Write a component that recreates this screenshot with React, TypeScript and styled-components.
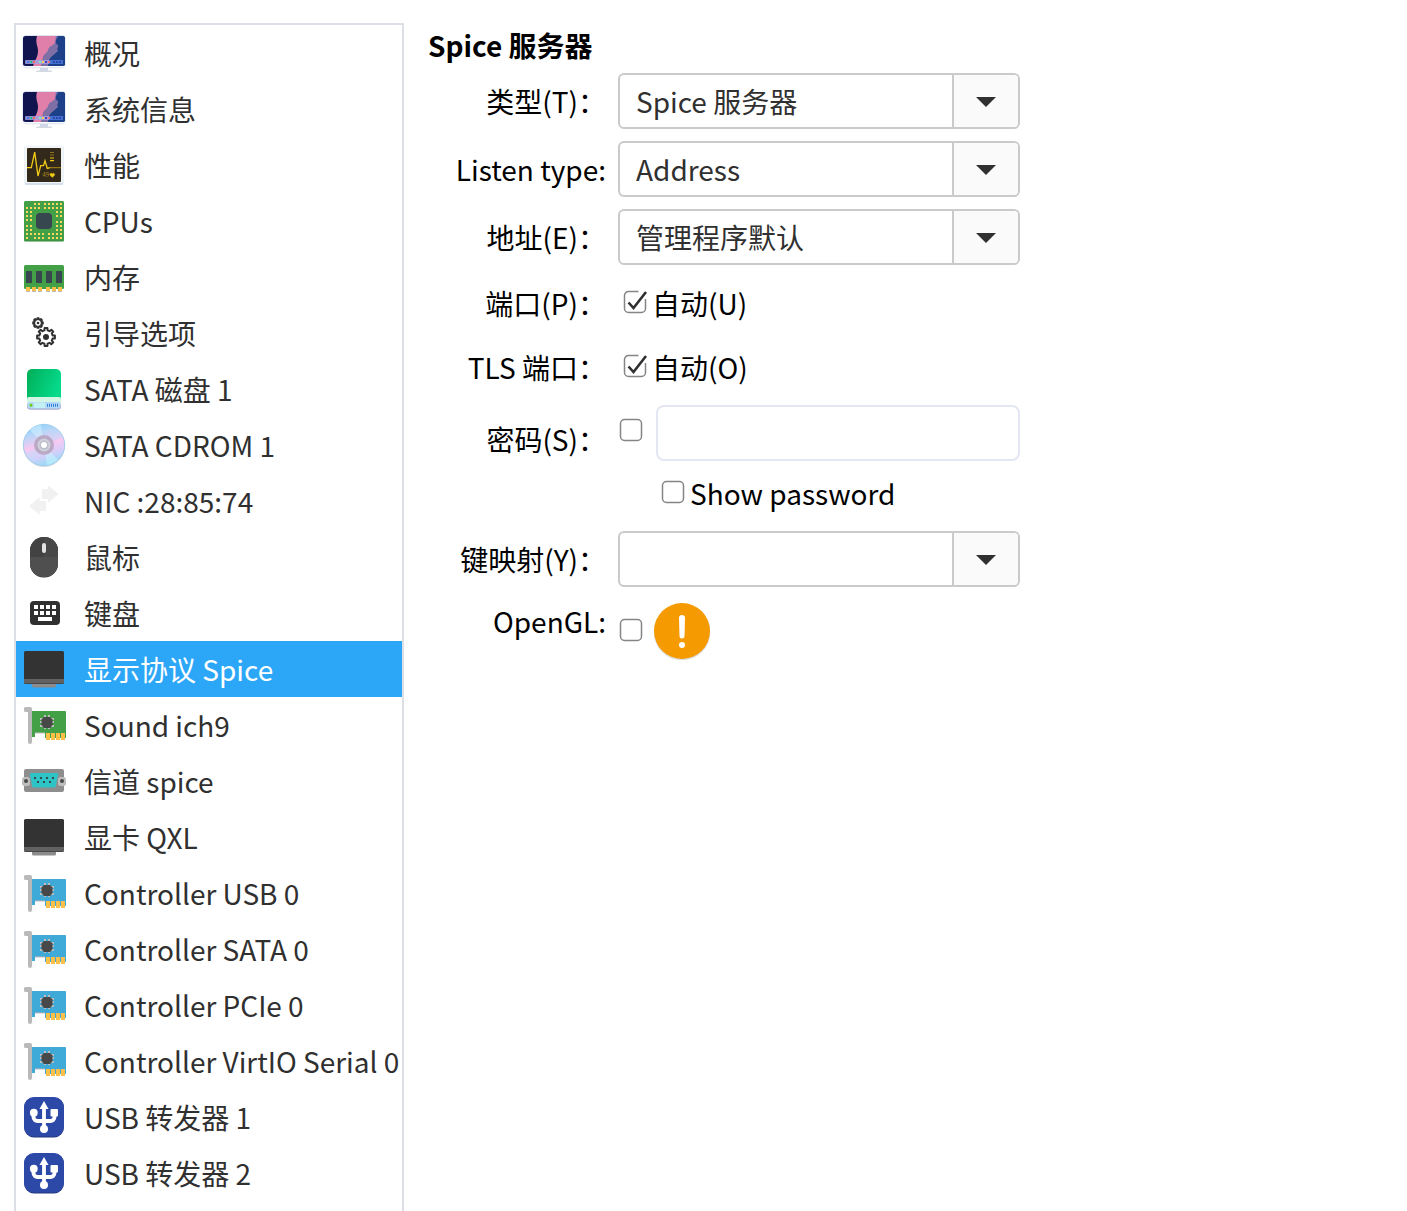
import React, { useId, useState } from 'react';
import styled, { createGlobalStyle, css } from 'styled-components';

const GlobalStyle = createGlobalStyle`
  *, *::before, *::after { box-sizing: border-box; }
  body {
    margin: 0;
    background: #ffffff;
    color: #000000;
    font-family: 'Noto Sans CJK SC', 'Noto Sans', sans-serif;
    font-size: 28px;
    line-height: 40px;
  }
  button, input, select { font: inherit; color: inherit; }
`;

/* ---------- layout ---------- */

const Page = styled.div`
  display: flex;
  align-items: stretch;
  gap: 24px;
  min-height: 100vh;
  padding: 23px 14px 0;
`;

const Sidebar = styled.nav`
  flex: none;
  width: 390px;
  border: 2px solid #dcdfe6;
  border-bottom: 0;
`;

const DeviceList = styled.ul`
  margin: 0;
  padding: 0;
  list-style: none;
`;

const DeviceButton = styled.button<{ $selected: boolean }>`
  display: flex;
  align-items: center;
  gap: 16px;
  width: 100%;
  height: 56px;
  padding: 0 4px;
  border: 0;
  background: ${(p) => (p.$selected ? '#2ca7f8' : 'transparent')};
  color: ${(p) => (p.$selected ? '#ffffff' : '#303030')};
  text-align: left;
  white-space: nowrap;
`;

const IconFrame = styled.svg`
  flex: none;
  width: 48px;
  height: 48px;
`;

const Main = styled.main`
  flex: 1;
  min-width: 0;
`;

const Heading = styled.h1`
  margin: 0 0 6px;
  font-size: 28px;
  font-weight: 700;
  line-height: 44px;
`;

const Form = styled.form`
  display: grid;
  grid-template-columns: 178px minmax(0, 402px);
  gap: 12px;
`;

const FieldLabel = styled.label<{ $align?: 'start' | 'center' | 'end' }>`
  align-self: ${(p) => p.$align ?? 'center'};
  padding: ${(p) => (p.$align ? '2px 0' : '0')};
  text-align: right;
  white-space: nowrap;
`;

const Combo = styled.div`
  display: grid;
  grid-template-columns: minmax(0, 1fr) 66px;
  height: 56px;
  overflow: hidden;
  border: 2px solid #cacaca;
  border-radius: 6px;
  background: #ffffff;
`;

const ComboSelect = styled.select`
  grid-area: 1 / 1 / 2 / 3;
  appearance: none;
  min-width: 0;
  padding: 0 82px 0 16px;
  border: 0;
  background: transparent;
  color: #303030;
`;

const ComboEntry = styled.input`
  min-width: 0;
  padding: 0 16px;
  border: 0;
  background: transparent;
  color: #303030;
`;

const arrowCell = css`
  display: flex;
  align-items: center;
  justify-content: center;
  padding: 2px 0 0;
  border: 0;
  border-left: 2px solid #cacaca;
  background: #fafafa;
`;

const ComboArrow = styled.span`
  ${arrowCell}
  grid-area: 1 / 2 / 2 / 3;
  pointer-events: none;
`;

const ComboButton = styled.button`
  ${arrowCell}
`;

const CheckRow = styled.div<{ $indent?: boolean; $height: number }>`
  display: flex;
  align-items: center;
  height: ${(p) => p.$height}px;
  padding-left: ${(p) => (p.$indent ? 42 : 4)}px;
  gap: 4px;
  & > input { margin-bottom: 2px; }
`;

const box = (inner: string) =>
  `url("data:image/svg+xml,${encodeURIComponent(
    `<svg xmlns='http://www.w3.org/2000/svg' width='26' height='26' fill='none'>${inner}</svg>`,
  )}")`;

const emptyBox = box("<rect x='2.5' y='2.5' width='21' height='21' rx='4' stroke='#858585' stroke-width='1.5'/>");
const tickedBox = box(
  "<path d='M16.5 2.5H6.5a4 4 0 0 0-4 4v13a4 4 0 0 0 4 4h13a4 4 0 0 0 4-4V10' stroke='#858585' stroke-width='1.5'/><path d='M6.5 13.5l5 5.5L24 3' stroke='#303030' stroke-width='2.6'/>",
);

const Check = styled.input.attrs({ type: 'checkbox' })`
  flex: none;
  appearance: none;
  width: 26px;
  height: 26px;
  margin: 0;
  background: ${emptyBox} center / 26px 26px no-repeat;
  &:checked { background-image: ${tickedBox}; }
`;

const PasswordRow = styled.div`
  display: flex;
  align-items: flex-start;
  gap: 12px;
  height: 56px;
  & > ${Check} { margin-top: 12px; }
`;

const PasswordEntry = styled.input.attrs({ type: 'password' })`
  flex: 1;
  min-width: 0;
  height: 56px;
  padding: 0 16px;
  border: 2px solid #e4e7f2;
  border-radius: 8px;
  background: #ffffff;
`;

const ShowRow = styled.div`
  grid-column: 2;
  height: 46px;
`;

const GlRow = styled.div`
  display: flex;
  align-items: center;
  gap: 8px;
  height: 64px;
  & > ${Check} { margin-bottom: 2px; }
`;

const Warning = styled.svg`
  flex: none;
  width: 60px;
  height: 60px;
`;

/* ---------- device icons ---------- */

function OverviewIcon() {
  const id = useId();
  const dots = ['#4a7bf0', '#22c08a', '#f0645c', '', '#7df0c0', '#f5cf5a', '#5040c0', '#f0707c'];
  return (
    <>
      <defs>
        <clipPath id={id}><rect x="3" y="7" width="42" height="30" rx="2.5" /></clipPath>
      </defs>
      <path d="M20 38h8v4h-8z" fill="#cfd6e8" />
      <rect x="16" y="41.5" width="16" height="1.6" rx=".8" fill="#d5d9e2" />
      <rect x="2.5" y="6.3" width="43" height="33" rx="3.5" fill="#d3dcea" />
      <rect x="2.8" y="36" width="42.4" height="2.4" rx="1.2" fill="#f8fafc" />
      <g clipPath={`url(#${id})`}>
        <path d="M3 7h42v30H3z" fill="#10154f" />
        <path d="M30 7h15v30H20z" fill="#1c4188" />
        <path d="M34 7h4c-1 3-3 4-2 7 1 2 3 2 2 4s-1 2 0 4c-3 3-7 5-9 9l-1 6h-9z" fill="#7e70a6" />
        <path d="M17 7h19c-1 3 0 5-2 8-2 2-5 2-6 6-1 3-4 4-5 8s-2 5-2 8h-8c2-6 5-9 5-15 0-5-3-8-1-15z" fill="#e07fa9" />
        <rect x="5" y="31" width="38" height="4" rx="1" fill="#a4a0e0" opacity=".85" />
        <path d="M29 31h13a1 1 0 0 1 1 1v2a1 1 0 0 1-1 1H29z" fill="#2f65d5" opacity=".8" />
        {dots.map((c, i) => c && <rect key={i} x={7 + i * 3} y="32" width="2" height="2" fill={c} />)}
        {[33, 36, 39].map((x) => <rect key={x} x={x} y="32" width="2" height="2" fill="#2948a4" />)}
      </g>
    </>
  );
}

function PerformanceIcon() {
  return (
    <>
      <rect x="4.5" y="5" width="39" height="39" rx="2" fill="#d3e0ec" />
      <rect x="4.5" y="4.5" width="39" height="37.5" rx="2" fill="#f2f5f8" />
      <rect x="7" y="7" width="34" height="34" rx="1" fill="#33291a" />
      <path d="M7 26.7h4.3l3.4-15.5L18 35l2.7-10.3h2.8l1.5-5 2.3 7.7 2.7-.7" fill="none" stroke="#f2cb17" strokeWidth="1.3" />
      <path d="M30 26.7h11" stroke="#a88c18" />
      <path d="M30 11.5h4M30 14h4" stroke="#8a7318" />
      <path d="M30 17h4M30 19.7h4" stroke="#f2cb17" strokeWidth="1.2" />
      <text x="22.5" y="36.2" fontSize="6" fill="#a88c18">49</text>
      <path d="M32.3 36.4l-2.2-2.2a1.2 1.2 0 0 1 2.2-1.3 1.2 1.2 0 0 1 2.2 1.3z" fill="#f2cb17" stroke="#f2cb17" strokeWidth=".4" />
    </>
  );
}

function CpuIcon() {
  const pinRows: [number, number[]][] = [
    [6, [14, 18, 24, 28, 32, 36, 40]],
    [10, [6, 10, 14, 18, 24, 28, 32, 36, 40]],
    [14, [6, 10, 36, 40]],
    [18, [6, 10, 36, 40]],
    [22, [6, 10]],
    [24, [36, 40]],
    [28, [6, 10, 36, 40]],
    [32, [6, 10, 36, 40]],
    [36, [6, 10, 14, 18, 22, 28, 32, 36, 40]],
    [40, [6, 14, 18, 22, 28, 32, 36, 40]],
  ];
  return (
    <>
      <rect x="4" y="4.5" width="40" height="40" rx="1.5" fill="#358a3a" />
      <rect x="4" y="4" width="40" height="39.5" rx="1.5" fill="#43a047" />
      {pinRows.map(([y, xs]) =>
        xs.map((x) => <rect key={`${x}-${y}`} x={x} y={y} width="2" height="2" fill="#ffd95e" />),
      )}
      <rect x="16" y="16" width="16" height="16" rx="4" fill="#37474f" />
    </>
  );
}

function MemoryIcon() {
  return (
    <>
      {[6, 12, 18, 26, 32, 38].map((x) => <rect key={x} x={x} y="34" width="4" height="5" fill="#bdbdbd" />)}
      <rect x="4" y="12" width="40" height="24" rx="1.5" fill="#43a047" />
      {[6, 12, 18, 26, 32, 38].map((x) => <rect key={x} x={x} y="34" width="4" height="4" fill="#fbc04a" />)}
      {[6, 16, 26, 36].map((x) => <rect key={x} x={x} y="18" width="6" height="12" rx=".5" fill="#37474f" />)}
    </>
  );
}

type GearProps = { x: number; y: number; outer: number; inner: number; hub: number; teeth: number; line: number };

function Gear({ x, y, outer, inner, hub, teeth, line }: GearProps) {
  const points: string[] = [];
  for (let i = 0; i < teeth; i++) {
    [[-0.3, inner], [-0.2, outer], [0.2, outer], [0.3, inner]].forEach(([shift, r]) => {
      const a = ((i + shift) / teeth) * Math.PI * 2;
      points.push(`${(r * Math.sin(a)).toFixed(2)},${(-r * Math.cos(a)).toFixed(2)}`);
    });
  }
  return (
    <g transform={`translate(${x} ${y})`}>
      <polygon points={points.join(' ')} fill="none" stroke="#303030" strokeWidth={line} strokeLinejoin="round" />
      <circle r={hub} fill="#303030" />
    </g>
  );
}

function BootIcon() {
  return (
    <>
      <Gear x={18} y={14} outer={5} inner={3.6} hub={1.3} teeth={8} line={1.7} />
      <Gear x={26} y={28} outer={9} inner={6.8} hub={3} teeth={8} line={2} />
    </>
  );
}

function DiskIcon() {
  const id = useId();
  return (
    <>
      <defs>
        <linearGradient id={id} x1="0" y1="0" x2="1" y2=".4">
          <stop stopColor="#00ae57" /><stop offset="1" stopColor="#05da8b" />
        </linearGradient>
      </defs>
      <path d="M7 9a5 5 0 0 1 5-5h24a5 5 0 0 1 5 5v27H7z" fill={`url(#${id})`} />
      <path d="M9 32h30a2 2 0 0 1 2 2v7H7v-7a2 2 0 0 1 2-2z" fill="#d3f5e4" />
      <rect x="7" y="37.5" width="34" height="7.3" rx="3.5" fill="#aab0cf" />
      <rect x="7.5" y="37" width="33" height="6.5" rx="3" fill="#b5d8fa" />
      <path d="M14 37.5h11v5.5H14z" fill="#c1f0f5" />
      <rect x="9.5" y="38.8" width="3" height="3" rx="1.3" fill="#6bd30a" />
      {[27, 29, 31, 33, 35, 37].map((x) => <rect key={x} x={x} y="38.8" width="1" height="3" fill="#2c80d5" />)}
    </>
  );
}

function DiscIcon() {
  const id = useId();
  return (
    <>
      <defs>
        <linearGradient id={id} x1=".35" y1="0" x2=".65" y2="1">
          <stop stopColor="#8cd2fa" /><stop offset=".22" stopColor="#bcd5f7" />
          <stop offset=".5" stopColor="#f9c8f1" /><stop offset=".75" stopColor="#d0d0fa" />
          <stop offset="1" stopColor="#8edcf5" />
        </linearGradient>
      </defs>
      <circle cx="24" cy="25" r="21" fill="#c9cdd6" opacity=".7" />
      <circle cx="24" cy="24" r="20.7" fill={`url(#${id})`} stroke="#93c9ec" strokeWidth=".8" />
      <path d="M24 24L10 9a20 20 0 0 1 11-5z" fill="#d8f3ff" opacity=".5" />
      <path d="M24 24l14 15a20 20 0 0 1-11 5z" fill="#c8faff" opacity=".5" />
      <path d="M24 24L36 7a20 20 0 0 1 7 9z" fill="#a6deff" opacity=".25" />
      <path d="M24 24L12 41a20 20 0 0 1-7-9z" fill="#ace6ff" opacity=".25" />
      <circle cx="24" cy="24" r="10" fill="#b9a9c5" />
      <circle cx="24" cy="24" r="6.5" fill="#cfd1dc" />
      <circle cx="24" cy="24" r="4.6" fill="#bcbdcb" />
      <circle cx="24" cy="24" r="3" fill="#fff" />
    </>
  );
}

function NetworkIcon() {
  return <path d="M22 12h6V8.3L38.7 17 28 25.7V22h-6zM26 24v10h-6.3v4L9 29l10.7-9v4z" fill="#f1f1f1" />;
}

function MouseIcon() {
  return (
    <>
      <rect x="10" y="4.5" width="28" height="40" rx="13.5" fill="#3a3a3a" />
      <rect x="10" y="4" width="28" height="40" rx="13.5" fill="#4f4f4f" />
      <path d="M10 24v-6.5a14 13.5 0 0 1 28 0V24z" fill="#424242" />
      <path d="M24 4a14 13.5 0 0 1 14 13.5V24H24z" fill="#484848" />
      <rect x="22" y="10" width="4" height="10" rx="2" fill="#e3e3e3" />
    </>
  );
}

function KeyboardIcon() {
  return (
    <>
      <rect x="10" y="12" width="30" height="24" rx="4" fill="#303030" />
      {[14, 20, 26, 32].map((x) => (
        <path key={x} d={`M${x} 16h4v4h-4zM${x} 22h4v4h-4z`} fill="#fff" />
      ))}
      <path d="M18 28h14v4H18z" fill="#fff" />
    </>
  );
}

function DisplayIcon() {
  return (
    <>
      <path d="M12 37h24v4a1.5 1.5 0 0 1-1.5 1.5h-21A1.5 1.5 0 0 1 12 41z" fill="#8c8c8c" />
      <path d="M4 33h40v4.500a1.5 1.5 0 0 1-1.5 1.5h-37A1.5 1.5 0 0 1 4 37.5z" fill="#484848" />
      <path d="M4 33h40v4a1 1 0 0 1-1 1H5a1 1 0 0 1-1-1z" fill="#616161" />
      <path d="M4 34V7.500A1.5 1.5 0 0 1 5.500 6h37A1.5 1.5 0 0 1 44 7.500V34z" fill="#333333" />
    </>
  );
}

function CardIcon({ color }: { color: string }) {
  return (
    <>
      <path d="M12 10h33a1 1 0 0 1 1 1v26H25v-5H15v4h-3z" fill={color} />
      <path d="M15 32.500h10v-1H15z" fill="#bdbdbd" />
      {[26, 31, 36, 41].map((x) => (
        <path key={x} d={`M${x} 32h4v7h-4z`} fill="#fbc04a" />
      ))}
      <path d="M5.500 6H10a2 2 0 0 1 2 2v33a2 2 0 0 1-4 0V11H5.500A1.5 1.5 0 0 1 4 9.500v-2A1.5 1.5 0 0 1 5.500 6z" fill="#b9b9b9" />
      <path d="M24 14h2v14h-2zM28 14h2v14h-2zM20 17h14v2H20zM20 20h14v2H20zM20 24h14v2H20z" fill="#bdbdbd" />
      <path d="M24 16h6l2.500 2.500v5.500L30 27h-6l-2.500-3v-5.500z" fill="#484848" />
    </>
  );
}

function SerialIcon() {
  return (
    <>
      <rect x="4" y="12" width="40" height="23" rx="2" fill="#8e8e8e" />
      {[6, 42].map((x) => (
        <g key={x}>
          <rect x={x - 4} y="20" width="8" height="9" rx="2.5" fill="#bdbdbd" />
          <circle cx={x} cy="24" r="2" fill="#4a4a4a" />
        </g>
      ))}
      <path d="M11 16h26q1.500 0 1.200 1.500l-2.400 11.500q-.3 1.500-1.800 1.500H14q-1.500 0-1.800-1.500L9.800 17.500Q9.500 16 11 16z" fill="#2ec4c6" />
      {[15, 21, 27, 33].map((x) => <rect key={x} x={x - 1} y="20" width="2" height="2" fill="#37474f" />)}
      {[17, 23, 29].map((x) => <rect key={x} x={x} y="24" width="2" height="2" fill="#37474f" />)}
    </>
  );
}

function UsbIcon() {
  return (
    <>
      <rect x="4" y="4.5" width="40" height="40" rx="10" fill="#25397f" />
      <rect x="4" y="4" width="40" height="39.5" rx="10" fill="#2d49a8" />
      <path d="M24 14v20M13.500 20v4a4 4 0 0 0 4 4h13a4 4 0 0 0 4-4v-4" fill="none" stroke="#fff" strokeWidth="3.8" />
      <path d="M24 8l4.500 8h-9z" fill="#fff" />
      <circle cx="24" cy="36" r="4" fill="#fff" />
      <circle cx="13.8" cy="19.7" r="3.9" fill="#fff" />
      <rect x="30.5" y="16" width="7.5" height="7.5" rx="1" fill="#fff" />
    </>
  );
}

/* ---------- data ---------- */

const controller = <CardIcon color="#3fa9d8" />;

const devices: { name: string; icon: React.ReactNode }[] = [
  { name: '概况', icon: <OverviewIcon /> },
  { name: '系统信息', icon: <OverviewIcon /> },
  { name: '性能', icon: <PerformanceIcon /> },
  { name: 'CPUs', icon: <CpuIcon /> },
  { name: '内存', icon: <MemoryIcon /> },
  { name: '引导选项', icon: <BootIcon /> },
  { name: 'SATA 磁盘 1', icon: <DiskIcon /> },
  { name: 'SATA CDROM 1', icon: <DiscIcon /> },
  { name: 'NIC :28:85:74', icon: <NetworkIcon /> },
  { name: '鼠标', icon: <MouseIcon /> },
  { name: '键盘', icon: <KeyboardIcon /> },
  { name: '显示协议 Spice', icon: <DisplayIcon /> },
  { name: 'Sound ich9', icon: <CardIcon color="#43a047" /> },
  { name: '信道 spice', icon: <SerialIcon /> },
  { name: '显卡 QXL', icon: <DisplayIcon /> },
  { name: 'Controller USB 0', icon: controller },
  { name: 'Controller SATA 0', icon: controller },
  { name: 'Controller PCIe 0', icon: controller },
  { name: 'Controller VirtIO Serial 0', icon: controller },
  { name: 'USB 转发器 1', icon: <UsbIcon /> },
  { name: 'USB 转发器 2', icon: <UsbIcon /> },
];

/* ---------- form parts ---------- */

const Arrow = () => (
  <svg width="20" height="10" viewBox="0 0 20 10" aria-hidden="true">
    <path d="M0 0h20L10 10z" fill="#303030" />
  </svg>
);

function SelectField({ id, label, value }: { id: string; label: string; value: string }) {
  return (
    <>
      <FieldLabel htmlFor={id}>{label}</FieldLabel>
      <Combo>
        <ComboSelect id={id} defaultValue={value}>
          <option>{value}</option>
        </ComboSelect>
        <ComboArrow><Arrow /></ComboArrow>
      </Combo>
    </>
  );
}

function AutoField({ id, label, text }: { id: string; label: string; text: string }) {
  return (
    <>
      <FieldLabel as="span">{label}</FieldLabel>
      <CheckRow $height={52}>
        <Check id={id} defaultChecked />
        <label htmlFor={id}>{text}</label>
      </CheckRow>
    </>
  );
}

export default function App() {
  const [selected, setSelected] = useState(11);
  return (
    <>
      <GlobalStyle />
      <Page>
        <Sidebar>
          <DeviceList>
            {devices.map((d, i) => (
              <li key={d.name}>
                <DeviceButton type="button" $selected={i === selected} onClick={() => setSelected(i)}>
                  <IconFrame viewBox="0 0 48 48" aria-hidden="true">{d.icon}</IconFrame>
                  {d.name}
                </DeviceButton>
              </li>
            ))}
          </DeviceList>
        </Sidebar>
        <Main>
          <Heading>Spice 服务器</Heading>
          <Form>
            <SelectField id="type" label="类型(T)：" value="Spice 服务器" />
            <SelectField id="listen" label="Listen type:" value="Address" />
            <SelectField id="address" label="地址(E)：" value="管理程序默认" />
            <AutoField id="port" label="端口(P)：" text="自动(U)" />
            <AutoField id="tls" label="TLS 端口：" text="自动(O)" />

            <FieldLabel htmlFor="password" $align="end">密码(S)：</FieldLabel>
            <PasswordRow>
              <Check aria-label="密码(S)" />
              <PasswordEntry id="password" />
            </PasswordRow>
            <ShowRow>
              <CheckRow $indent $height={40}>
                <Check id="show" />
                <label htmlFor="show">Show password</label>
              </CheckRow>
            </ShowRow>

            <FieldLabel htmlFor="keymap">键映射(Y)：</FieldLabel>
            <Combo>
              <ComboEntry id="keymap" />
              <ComboButton type="button" aria-label="键映射"><Arrow /></ComboButton>
            </Combo>

            <FieldLabel htmlFor="opengl" $align="start">OpenGL:</FieldLabel>
            <GlRow>
              <Check id="opengl" />
              <Warning viewBox="0 0 60 60" role="img" aria-label="warning">
                <circle cx="30" cy="31" r="28.3" fill="#dddddd" />
                <circle cx="30" cy="30" r="28" fill="#f59a00" />
                <path d="M27 17a3 3 0 0 1 6 0l-.5 18a2.500 2.500 0 0 1-5 0z" fill="#fff" />
                <circle cx="30" cy="44" r="3" fill="#fff" />
              </Warning>
            </GlRow>
          </Form>
        </Main>
      </Page>
    </>
  );
}
